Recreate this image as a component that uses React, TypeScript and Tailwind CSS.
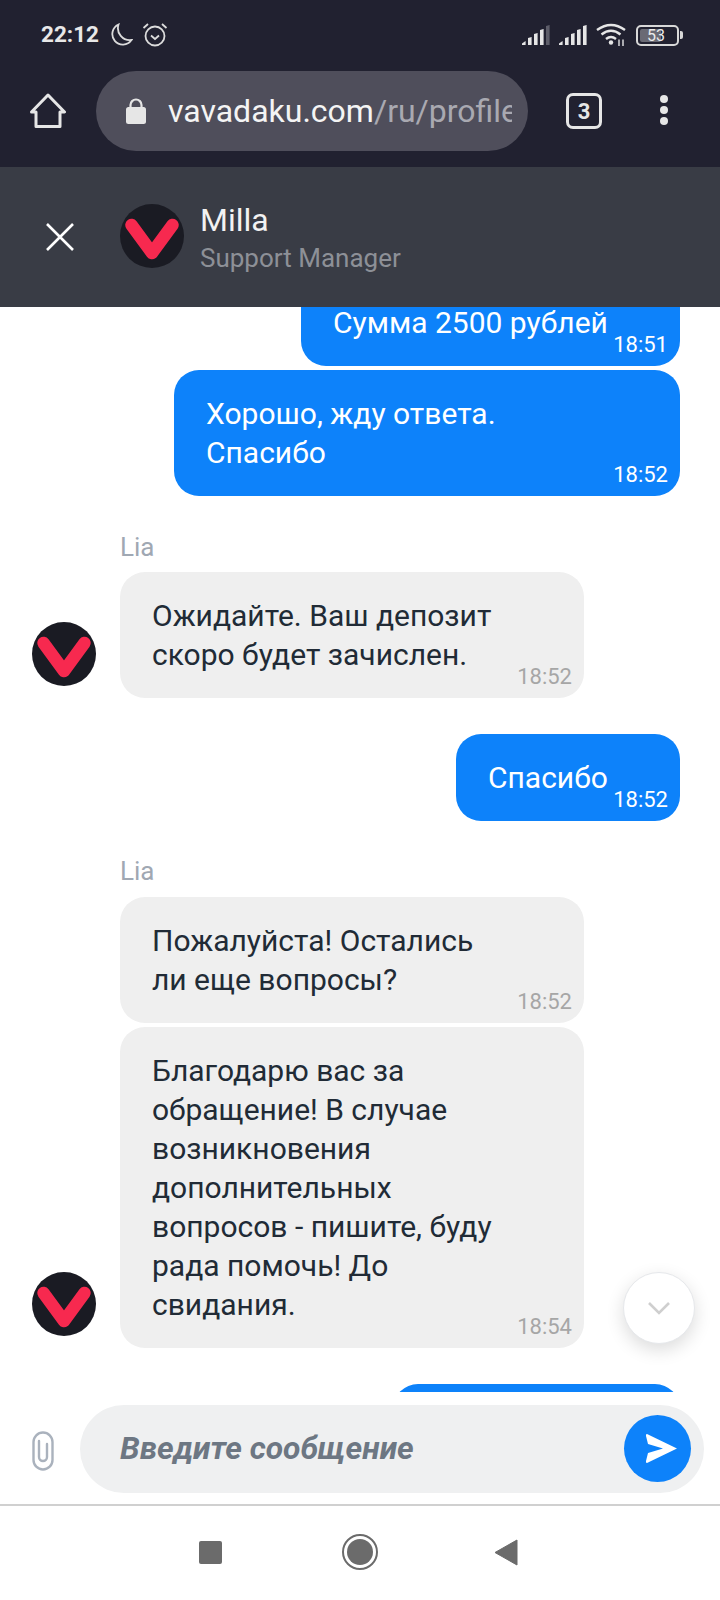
import { ReactNode } from "react"

function Logo() {
    return (
        <svg width="64" height="64" viewBox="0 0 64 64" className="shrink-0">
            <circle cx="32" cy="32" r="32" fill="#1a1b23" />
            <path d="M11.5 21 L32 49 L52.5 21" fill="none" stroke="#f7294f" strokeWidth="12.5" strokeLinecap="round" strokeLinejoin="round" />
        </svg>
    )
}

function Signal({ dim }: { dim?: boolean }) {
    const bars = [0, 1, 2, 3, 4]
    return (
        <svg width="28" height="20" viewBox="0 0 28 20">
            {bars.map((i) => {
                const x = i * 6
                const top = 17 - i * 4
                return (
                    <polygon
                        key={i}
                        points={`${x},20 ${x + 3.6},20 ${x + 3.6},${top - 1} ${x},${top + (i === 0 ? 1.5 : 0)}`}
                        fill={dim && i === 4 ? "#5d5d69" : "#e6e6e6"}
                    />
                )
            })}
        </svg>
    )
}

function StatusBar() {
    return (
        <div className="h-[71px] flex items-center pl-[41px] pr-[37px] pb-[1px]">
            <span className="text-[22.5px] font-bold text-[#e8e8e8]">22:12</span>
            <svg width="24" height="24" viewBox="0 0 24 24" className="ml-[10px]" fill="none" stroke="#dcdcdc" strokeWidth="1.8">
                <path d="M9.5 1.5 A10.5 10.5 0 1 0 22.5 17 A12 12 0 0 1 9.5 1.5 Z" />
            </svg>
            <svg width="26" height="26" viewBox="0 0 26 26" className="ml-[9px]" fill="none" stroke="#dcdcdc" strokeWidth="1.8">
                <circle cx="13" cy="14" r="9.5" />
                <path d="M9 13.5 L13 17 L17 13.5" />
                <path d="M1.5 6 L6 2 M24.5 6 L20 2" />
            </svg>
            <div className="ml-auto flex items-center gap-[9px]">
                <Signal dim />
                <Signal />
                <svg width="30" height="24" viewBox="0 0 30 24" fill="none" stroke="#e6e6e6" strokeWidth="2.4">
                    <path d="M1 7 Q15 -3 29 7" />
                    <path d="M5.5 11.5 Q15 4 24.5 11.5" />
                    <path d="M10 16 Q15 12 20 16" />
                    <circle cx="15" cy="19.5" r="2.2" fill="#e6e6e6" stroke="none" />
                    <path d="M23 16.5 V23 M27 16.5 V23" strokeWidth="1.4" />
                </svg>
                <div className="relative flex items-center ml-[1px]">
                    <div className="w-[43px] h-[21px] rounded-[5px] border-2 border-[#d8d8d8] p-[2px] flex items-stretch">
                        <div className="w-[21px] rounded-[2px] bg-[#6a6a74]" />
                    </div>
                    <span className="absolute left-[11px] top-0 h-[21px] leading-[21px] text-[16px] text-[#ececec]">53</span>
                    <div className="w-[3px] h-[8px] ml-[1px] rounded-r-[2px] bg-[#d8d8d8]" />
                </div>
            </div>
        </div>
    )
}

function BrowserBar() {
    return (
        <div className="h-[96px] flex items-start pl-[30px]">
            <svg width="36" height="36" viewBox="0 0 36 36" className="mt-[22px]" fill="none" stroke="#e6e6e6" strokeWidth="3" strokeLinejoin="round">
                <path d="M1.5 19 L18 2 L34.5 19 H30 V33.5 H6 V19 Z" />
            </svg>
            <div className="ml-[30px] w-[432px] h-[80px] rounded-full bg-[#4f4e5b] flex items-center pl-[30px] pr-[16px] overflow-hidden">
                <svg width="20" height="26" viewBox="0 0 20 26" className="shrink-0">
                    <path d="M4.5 10 V7 a5.5 5.5 0 0 1 11 0 V10" fill="none" stroke="#e6e6e6" strokeWidth="2.2" />
                    <rect x="0" y="9" width="20" height="17" rx="2.5" fill="#e6e6e6" />
                </svg>
                <div className="ml-[22px] overflow-hidden whitespace-nowrap text-[32px] text-[#f4f4f4]">
                    vavadaku.com<span className="text-[#a9a9b1]">/ru/profile</span>
                </div>
            </div>
            <div className="ml-[38px] mt-[22px] w-[36px] h-[36px] rounded-[7px] border-[3px] border-[#e6e6e6] flex items-center justify-center text-[22px] font-bold text-[#e6e6e6]">
                3
            </div>
            <div className="ml-[58px] mt-[24px] flex flex-col gap-[3px]">
                <div className="w-[8px] h-[8px] rounded-full bg-[#e6e6e6]" />
                <div className="w-[8px] h-[8px] rounded-full bg-[#e6e6e6]" />
                <div className="w-[8px] h-[8px] rounded-full bg-[#e6e6e6]" />
            </div>
        </div>
    )
}

function ChatHeader() {
    return (
        <div className="h-[140px] bg-[#393c45] flex items-center pl-[46px] shrink-0">
            <svg width="28" height="28" viewBox="0 0 28 28" stroke="#ffffff" strokeWidth="2.6">
                <path d="M1 1 L27 27 M27 1 L1 27" />
            </svg>
            <div className="ml-[46px] mb-[2px]">
                <Logo />
            </div>
            <div className="ml-[16px] mt-[2px]">
                <div className="text-[32px] leading-[36px] text-[#f2f2f2]">Milla</div>
                <div className="text-[26px] leading-[32px] mt-[4px] text-[#8d9097]">Support Manager</div>
            </div>
        </div>
    )
}

function Outgoing({ time, className, children }: { time: string; className: string; children: ReactNode }) {
    return (
        <div className={`relative self-end bg-[#0d82fa] text-white rounded-[25px] pl-[32px] text-[30px] leading-[39px] ${className}`}>
            {children}
            <span className="absolute right-[12px] bottom-[9px] text-[22px] leading-[24px]">{time}</span>
        </div>
    )
}

function Incoming({ time, children }: { time: string; children: ReactNode }) {
    return (
        <div className="relative w-[464px] bg-[#efefef] text-[#212b36] rounded-[25px] pl-[32px] pt-[24px] pb-[24px] text-[30px] leading-[39px]">
            {children}
            <span className="absolute right-[12px] bottom-[9px] text-[22px] leading-[24px] text-[#a6a6a6]">{time}</span>
        </div>
    )
}

function AgentLabel({ className }: { className: string }) {
    return <div className={`text-[26px] leading-[40px] text-[#a0a8b3] ${className}`}>Lia</div>
}

function Messages() {
    return (
        <div className="relative h-[1085px] overflow-hidden bg-white px-[40px]">
            <div className="flex flex-col pl-[80px] -mt-[28px]">
                <Outgoing time="18:51" className="w-[379px] h-[87px] pt-[24px]">
                    Сумма 2500 рублей
                </Outgoing>
                <Outgoing time="18:52" className="w-[506px] mt-[4px] pt-[24px] pb-[24px]">
                    Хорошо, жду ответа.
                    <br />
                    Спасибо
                </Outgoing>

                <AgentLabel className="mt-[31px]" />
                <div className="relative mt-[5px]">
                    <div className="absolute left-[-88px] bottom-[12px]">
                        <Logo />
                    </div>
                    <Incoming time="18:52">
                        Ожидайте. Ваш депозит
                        <br />
                        скоро будет зачислен.
                    </Incoming>
                </div>

                <Outgoing time="18:52" className="w-[224px] h-[87px] mt-[36px] pt-[24px]">
                    Спасибо
                </Outgoing>

                <AgentLabel className="mt-[30px]" />
                <div className="mt-[6px]">
                    <Incoming time="18:52">
                        Пожалуйста! Остались
                        <br />
                        ли еще вопросы?
                    </Incoming>
                </div>
                <div className="relative mt-[4px]">
                    <div className="absolute left-[-88px] bottom-[12px]">
                        <Logo />
                    </div>
                    <Incoming time="18:54">
                        Благодарю вас за
                        <br />
                        обращение! В случае
                        <br />
                        возникновения
                        <br />
                        дополнительных
                        <br />
                        вопросов - пишите, буду
                        <br />
                        рада помочь! До
                        <br />
                        свидания.
                    </Incoming>
                </div>

                <Outgoing time="" className="w-[287px] h-[87px] mt-[36px]">
                    {""}
                </Outgoing>
            </div>

            <div className="absolute left-[623px] top-[965px] w-[72px] h-[72px] rounded-full bg-white border border-[#e6e8eb] shadow-[0_6px_18px_rgba(0,0,0,0.14)] flex items-center justify-center">
                <svg width="24" height="14" viewBox="0 0 24 14" fill="none" stroke="#cfcfcf" strokeWidth="2.6">
                    <path d="M2 2 L12 12 L22 2" />
                </svg>
            </div>
        </div>
    )
}

function Composer() {
    return (
        <div className="flex items-start h-[114px] pt-[13px] pl-[32px] border-b-2 border-[#d0d0d0] bg-white">
            <svg width="22" height="40" viewBox="0 0 22 40" className="mt-[26px]" fill="none" stroke="#aab2bd" strokeWidth="2.4" strokeLinecap="round">
                <rect x="1.5" y="1.5" width="19" height="37" rx="9.5" />
                <path d="M7 10 V26 a4 4 0 0 0 8 0 V13" />
            </svg>
            <div className="ml-[26px] w-[624px] h-[88px] rounded-full bg-[#eff0f1] flex items-center pl-[40px] pr-[13px]">
                <span className="text-[31.8px] font-bold italic text-[#6d7783]">Введите сообщение</span>
                <div className="ml-auto mb-[1px] w-[67px] h-[67px] rounded-full bg-[#0d82fa] flex items-center justify-center">
                    <svg width="33" height="31" viewBox="0 0 33 31" className="ml-[8px]">
                        <path d="M2 1 L32 15.5 L2 30 Q0.5 30 1 28 L3 20 L18 15.5 L3 11 L1 3 Q0.5 1 2 1 Z" fill="#ffffff" />
                    </svg>
                </div>
            </div>
        </div>
    )
}

function NavBar() {
    return (
        <div className="flex-1 bg-white flex items-center justify-center pb-[2px] pr-[4px]">
            <div className="w-[23px] h-[23px] rounded-[2px] bg-[#6b6b6b]" />
            <div className="ml-[120px] w-[36px] h-[36px] rounded-full border-[2px] border-[#6b6b6b] p-[3px]">
                <div className="w-full h-full rounded-full bg-[#6b6b6b]" />
            </div>
            <svg width="24" height="27" viewBox="0 0 24 27" className="ml-[116px]">
                <path d="M23 1 V26 L1 13.5 Z" fill="#6b6b6b" stroke="#6b6b6b" strokeLinejoin="round" />
            </svg>
        </div>
    )
}

export default function App() {
    return (
        <div className="w-[720px] h-[1600px] flex flex-col bg-white font-['Roboto',sans-serif] overflow-hidden">
            <div className="bg-[#212130] shrink-0">
                <StatusBar />
                <BrowserBar />
            </div>
            <ChatHeader />
            <Messages />
            <Composer />
            <NavBar />
        </div>
    )
}
